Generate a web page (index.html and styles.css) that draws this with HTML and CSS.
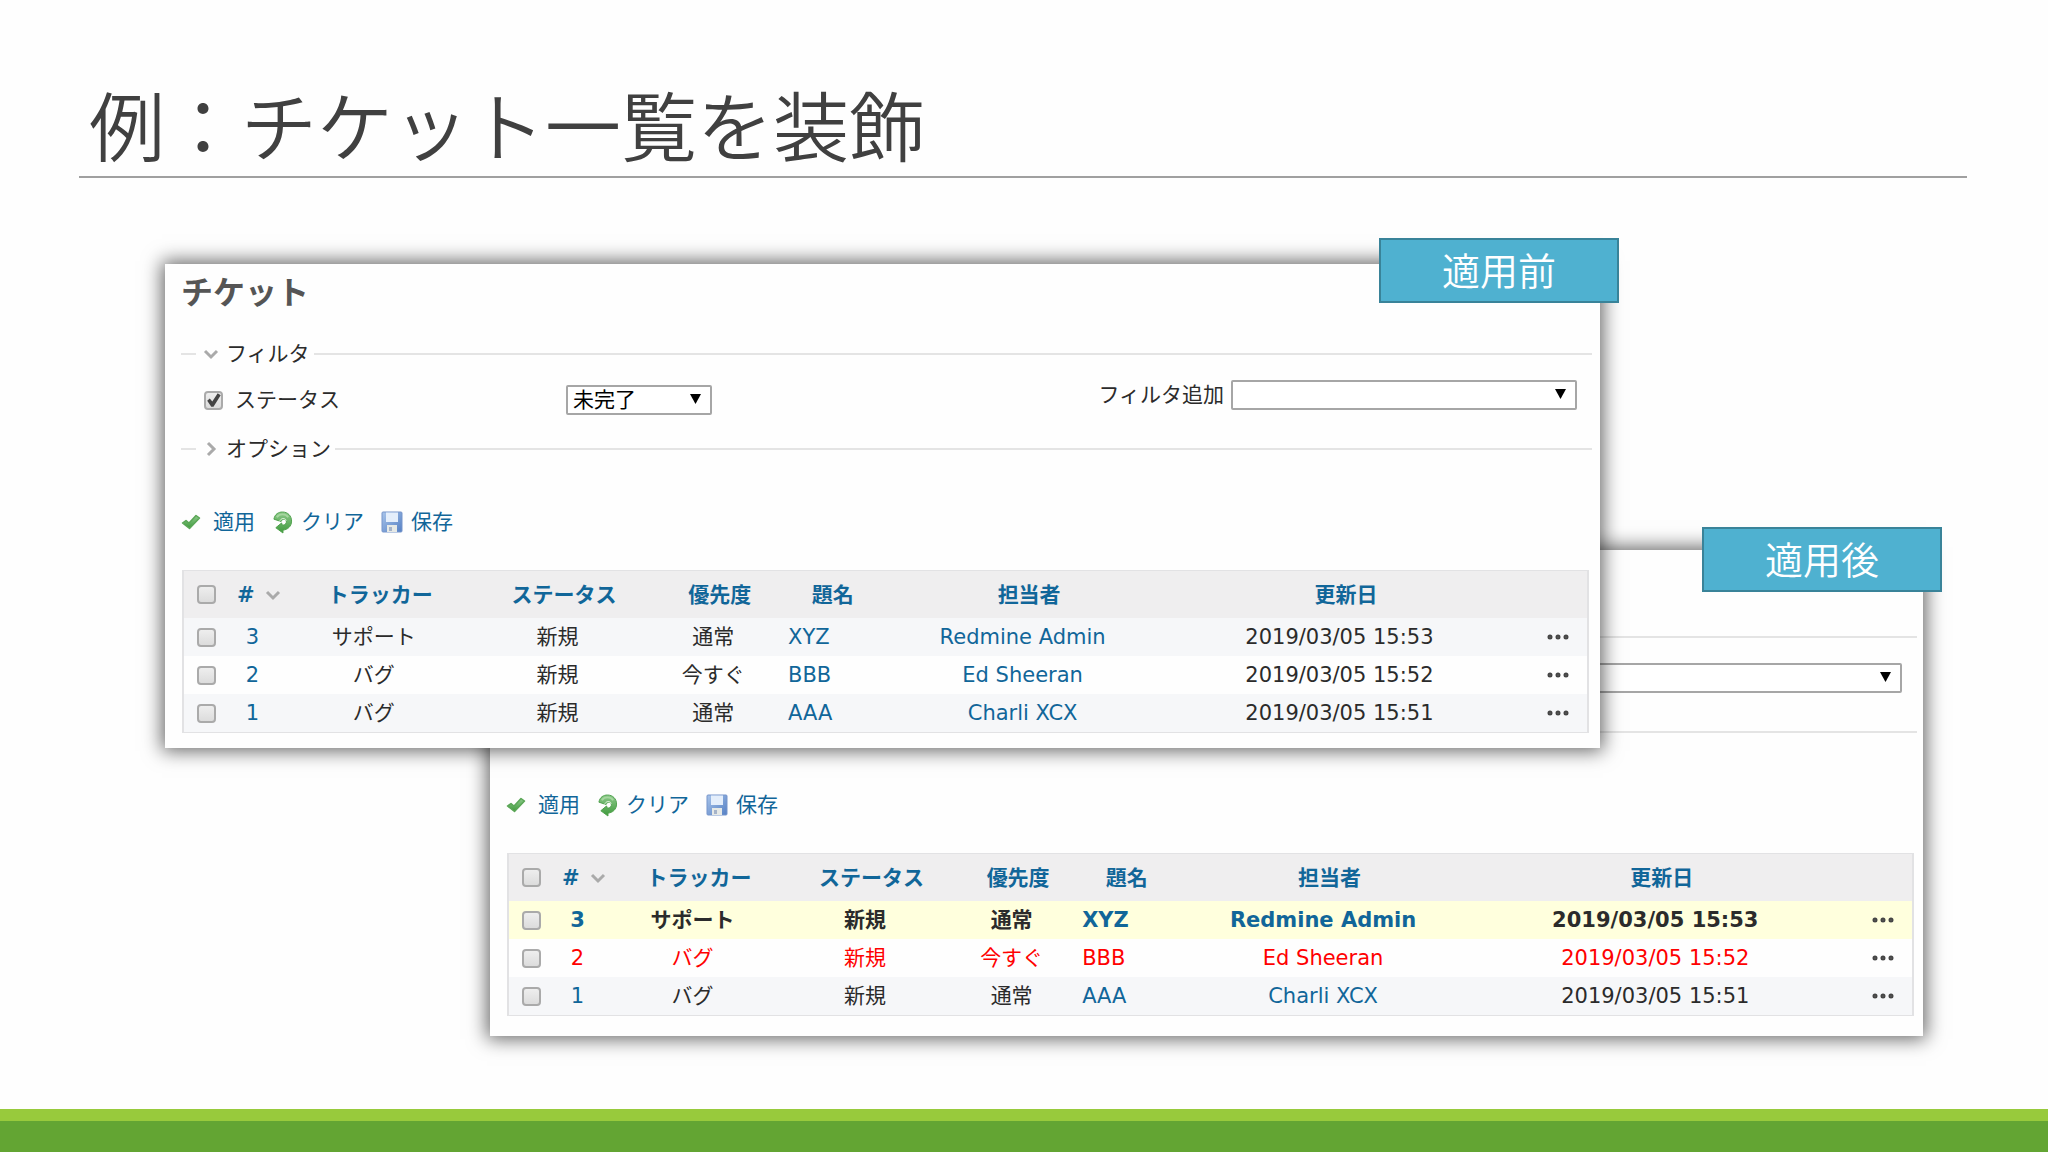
FILE: index.html
```html
<!DOCTYPE html>
<html lang="ja">
<head>
<meta charset="utf-8">
<meta name="viewport" content="width=device-width, initial-scale=1">
<title>例：チケット一覧を装飾</title>
<link rel="stylesheet" href="styles.css">
</head>
<body>
<svg class="defs" aria-hidden="true">
  <defs>
    <linearGradient id="green" x1="0" y1="0" x2="0" y2="1"><stop offset="0" stop-color="#8cc98a"/><stop offset="1" stop-color="#3f9a3c"/></linearGradient>
    <linearGradient id="blue" x1="0" y1="0" x2="1" y2="1"><stop offset="0" stop-color="#a8c4ea"/><stop offset="1" stop-color="#5580c4"/></linearGradient>
    <symbol id="i-check" viewBox="0 0 20 16"><path d="M1.5 9 L5 6.500 L8 9 L15 1.500 L18.500 4 L8.500 14.500 Z" fill="url(#green)" stroke="#5aa656" stroke-width="1.500" stroke-linejoin="round"/></symbol>
    <symbol id="i-reload" viewBox="0 0 22 24"><path d="M2 8.500 C3 3 7 1 11 1 C16.500 1 20.500 5 20.500 10.500 C20.500 16 16.500 19.500 11.500 20 V23 L4 17.500 L10 12.500 L11 15 C14 14.500 15.500 12.500 15 10.500 C14.500 8 11 7.500 9.500 11 Z" fill="url(#green)" stroke="#4d9f49" stroke-width="1" stroke-linejoin="round"/><path d="M5 6.500 C8 2.500 14 2.500 17 6.500" fill="none" stroke="#a6d69f" stroke-width="2"/><path d="M8 11 C9 7 14 7 15 10" fill="none" stroke="#e0f2dc" stroke-width="1"/></symbol>
    <symbol id="i-save" viewBox="0 0 22 22"><rect x="1" y="1" width="20" height="20" rx="1" fill="url(#blue)" stroke="#7795cb"/><rect x="5" y="1.500" width="12" height="9.500" fill="#e4eefb"/><rect x="6" y="14" width="10" height="7" fill="#e6e9e6"/><rect x="8" y="16" width="3" height="4" fill="#a5b3c9"/></symbol>
    <symbol id="i-add" viewBox="0 0 20 20"><circle cx="10" cy="10" r="9" fill="#3f9a5c"/><path d="M10 5v10M5 10h10" stroke="#fff" stroke-width="3"/></symbol>
    <symbol id="i-down" viewBox="0 0 16 16"><path d="M2 5 L8 11 L14 5" fill="none" stroke="#aaa" stroke-width="3"/></symbol>
    <symbol id="i-right" viewBox="0 0 16 16"><path d="M5 2 L11 8 L5 14" fill="none" stroke="#aaa" stroke-width="3"/></symbol>
    <symbol id="i-dots" viewBox="0 0 22 6"><g fill="#888" stroke="#444" stroke-width="2"><circle cx="3" cy="3" r="1.500"/><circle cx="11" cy="3" r="1.500"/><circle cx="19" cy="3" r="1.500"/></g></symbol>
  </defs>
</svg>

<header class="slide-header"><h1>例：チケット一覧を装飾</h1></header>

<main class="stage">
  <section class="panel panel-before">
    <div class="panel-head">
      <h2>チケット</h2>
      <svg class="icon-add" aria-hidden="true"><use href="#i-add"/></svg>
    </div>
    <fieldset>
      <legend><svg class="chevron" aria-hidden="true"><use href="#i-down"/></svg>フィルタ</legend>
      <div class="filter-row">
        <div class="filter-status">
          <input type="checkbox" id="status-a" checked><label for="status-a">ステータス</label>
          <span class="select select-short"><select aria-label="ステータスの値"><option>未完了</option></select></span>
        </div>
        <div class="filter-add">
          <label for="add-a">フィルタ追加</label>
          <span class="select select-long"><select id="add-a"><option></option></select></span>
        </div>
      </div>
    </fieldset>
    <fieldset>
      <legend><svg class="chevron" aria-hidden="true"><use href="#i-right"/></svg>オプション</legend>
    </fieldset>
    <p class="actions">
      <a href="#"><svg class="icon-check" aria-hidden="true"><use href="#i-check"/></svg>適用</a>
      <a href="#"><svg class="icon-reload" aria-hidden="true"><use href="#i-reload"/></svg>クリア</a>
      <a href="#"><svg class="icon-save" aria-hidden="true"><use href="#i-save"/></svg>保存</a>
    </p>
    <table class="issues">
      <colgroup><col class="c-check"><col class="c-id"><col class="c-tracker"><col class="c-status"><col class="c-priority"><col class="c-subject"><col class="c-assignee"><col class="c-updated"><col class="c-menu"></colgroup>
      <thead>
        <tr>
          <th class="check"><input type="checkbox" aria-label="すべて選択"></th>
          <th class="id"><a href="#">#<svg class="chevron" aria-hidden="true"><use href="#i-down"/></svg></a></th>
          <th><a href="#">トラッカー</a></th><th><a href="#">ステータス</a></th><th><a href="#">優先度</a></th><th><a href="#">題名</a></th><th><a href="#">担当者</a></th><th><a href="#">更新日</a></th><th></th>
        </tr>
      </thead>
      <tbody>
        <tr class="odd"><td class="check"><input type="checkbox" aria-label="3"></td><td class="id"><a href="#">3</a></td><td>サポート</td><td>新規</td><td>通常</td><td class="subject"><a href="#">XYZ</a></td><td><a href="#">Redmine Admin</a></td><td>2019/03/05 15:53</td><td class="menu"><button type="button" aria-label="操作"><svg aria-hidden="true"><use href="#i-dots"/></svg></button></td></tr>
        <tr><td class="check"><input type="checkbox" aria-label="2"></td><td class="id"><a href="#">2</a></td><td>バグ</td><td>新規</td><td>今すぐ</td><td class="subject"><a href="#">BBB</a></td><td><a href="#">Ed Sheeran</a></td><td>2019/03/05 15:52</td><td class="menu"><button type="button" aria-label="操作"><svg aria-hidden="true"><use href="#i-dots"/></svg></button></td></tr>
        <tr class="odd"><td class="check"><input type="checkbox" aria-label="1"></td><td class="id"><a href="#">1</a></td><td>バグ</td><td>新規</td><td>通常</td><td class="subject"><a href="#">AAA</a></td><td><a href="#">Charli XCX</a></td><td>2019/03/05 15:51</td><td class="menu"><button type="button" aria-label="操作"><svg aria-hidden="true"><use href="#i-dots"/></svg></button></td></tr>
      </tbody>
    </table>
    <div class="tag">適用前</div>
  </section>

  <section class="panel panel-after">
    <div class="panel-head"></div>
    <fieldset class="untitled">
      <div class="filter-row">
        <span class="select select-long"><select aria-label="追加"><option></option></select></span>
      </div>
    </fieldset>
    <fieldset class="untitled untitled-closed"></fieldset>
    <p class="actions">
      <a href="#"><svg class="icon-check" aria-hidden="true"><use href="#i-check"/></svg>適用</a>
      <a href="#"><svg class="icon-reload" aria-hidden="true"><use href="#i-reload"/></svg>クリア</a>
      <a href="#"><svg class="icon-save" aria-hidden="true"><use href="#i-save"/></svg>保存</a>
    </p>
    <table class="issues">
      <colgroup><col class="c-check"><col class="c-id"><col class="c-tracker"><col class="c-status"><col class="c-priority"><col class="c-subject"><col class="c-assignee"><col class="c-updated"><col class="c-menu"></colgroup>
      <thead>
        <tr>
          <th class="check"><input type="checkbox" aria-label="すべて選択"></th>
          <th class="id"><a href="#">#<svg class="chevron" aria-hidden="true"><use href="#i-down"/></svg></a></th>
          <th><a href="#">トラッカー</a></th><th><a href="#">ステータス</a></th><th><a href="#">優先度</a></th><th><a href="#">題名</a></th><th><a href="#">担当者</a></th><th><a href="#">更新日</a></th><th></th>
        </tr>
      </thead>
      <tbody>
        <tr class="mine"><td class="check"><input type="checkbox" aria-label="3"></td><td class="id"><a href="#">3</a></td><td>サポート</td><td>新規</td><td>通常</td><td class="subject"><a href="#">XYZ</a></td><td><a href="#">Redmine Admin</a></td><td>2019/03/05 15:53</td><td class="menu"><button type="button" aria-label="操作"><svg aria-hidden="true"><use href="#i-dots"/></svg></button></td></tr>
        <tr class="urgent"><td class="check"><input type="checkbox" aria-label="2"></td><td class="id"><a href="#">2</a></td><td>バグ</td><td>新規</td><td>今すぐ</td><td class="subject"><a href="#">BBB</a></td><td><a href="#">Ed Sheeran</a></td><td>2019/03/05 15:52</td><td class="menu"><button type="button" aria-label="操作"><svg aria-hidden="true"><use href="#i-dots"/></svg></button></td></tr>
        <tr class="odd"><td class="check"><input type="checkbox" aria-label="1"></td><td class="id"><a href="#">1</a></td><td>バグ</td><td>新規</td><td>通常</td><td class="subject"><a href="#">AAA</a></td><td><a href="#">Charli XCX</a></td><td>2019/03/05 15:51</td><td class="menu"><button type="button" aria-label="操作"><svg aria-hidden="true"><use href="#i-dots"/></svg></button></td></tr>
      </tbody>
    </table>
    <div class="tag">適用後</div>
  </section>
</main>

<footer class="slide-footer"></footer>
</body>
</html>
```

FILE: styles.css
```css
*,
*::before,
*::after {
  box-sizing: border-box;
}

body {
  margin: 0;
  min-height: 100vh;
  display: flex;
  flex-direction: column;
  background: #fefefe;
  color: #2b2b2b;
  font-family: "DejaVu Sans", "Noto Sans CJK JP", sans-serif;
  font-size: 21px;
  line-height: 28px;
}

.defs {
  position: absolute;
  width: 0;
  height: 0;
}

a {
  color: #116699;
  text-decoration: none;
}

.slide-header {
  margin: 0 81px 86px 79px;
  padding: 72px 0 2px 10px;
  border-bottom: 2px solid #a0a0a0;
}

h1 {
  margin: 0;
  color: #404040;
  font-family: "Noto Sans CJK JP", sans-serif;
  font-size: 76px;
  font-weight: 350;
  line-height: 102px;
}

/* Two overlapping panels share a proportional grid. */
.stage {
  display: grid;
  grid-template-columns:
    minmax(0, 165fr) minmax(0, 325fr) minmax(0, 1110fr)
    minmax(0, 323fr) minmax(0, 125fr);
  grid-template-rows: 286px 198px auto;
  margin-bottom: 73px;
}

.panel {
  position: relative;
  background: #fefefe;
  box-shadow: 0 0 18px 3px rgba(0, 0, 0, 0.6);
}

.panel-before {
  grid-area: 1 / 2 / 3 / 4;
  z-index: 2;
  padding: 9px 8px 15px 16px;
}

.panel-after {
  grid-area: 2 / 3 / 4 / 5;
  z-index: 1;
  padding: 6px 6px 20px 16px;
}

.panel-head {
  display: flex;
  justify-content: space-between;
  align-items: center;
  height: 40px;
  margin-bottom: 27px;
  padding-right: 155px;
}

.panel-after .panel-head {
  margin-bottom: 40px;
}

h2 {
  margin: 0;
  color: #555;
  font-size: 32px;
  line-height: 40px;
}

.icon-add {
  width: 22px;
  height: 22px;
}

fieldset {
  margin: 0;
  padding: 0 15px;
  border: 0;
  border-top: 2px solid #e4e4e4;
  min-width: 0;
}

legend {
  display: flex;
  align-items: center;
  gap: 7px;
  padding: 0 4px 0 7px;
}

.chevron {
  width: 16px;
  height: 16px;
}

.filter-row {
  display: flex;
  justify-content: space-between;
  align-items: flex-start;
  height: 67px;
  padding: 12px 0 0 8px;
}

/* Group without a legend: keeps the height a legend would take. */
.untitled .filter-row {
  justify-content: flex-end;
  height: 93px;
  padding-top: 25px;
}

.untitled-closed {
  height: 15px;
}

.filter-status,
.filter-add {
  display: flex;
  align-items: center;
}

.filter-status {
  padding-top: 5px;
}

.filter-status label {
  width: 331px;
  margin-left: 12px;
}

.filter-add {
  gap: 7px;
}

.select {
  position: relative;
  display: block;
}

.select::after {
  content: "";
  position: absolute;
  right: 11px;
  top: 9px;
  width: 11px;
  height: 10px;
  background: #000;
  clip-path: polygon(0 0, 100% 0, 50% 100%);
  pointer-events: none;
}

.select-short {
  width: 146px;
}

.select-long {
  width: 346px;
}

select {
  appearance: none;
  display: block;
  width: 100%;
  height: 30px;
  margin: 0;
  padding: 0 5px;
  border: 2px solid #a6a6a6;
  border-radius: 2px;
  background: #fff;
  color: #000;
  font: inherit;
  line-height: 26px;
}

input[type="checkbox"] {
  appearance: none;
  display: block;
  width: 19px;
  height: 19px;
  margin: 0;
  border: 2px solid #aaa;
  border-radius: 4px;
  background: linear-gradient(#eee, #dcdcdc);
}

input[type="checkbox"]:checked::after {
  content: "";
  display: block;
  width: 15px;
  height: 15px;
  background: #444;
  clip-path: polygon(8% 55%, 25% 40%, 42% 60%, 78% 5%, 98% 18%, 50% 95%, 35% 95%);
}

.actions {
  display: flex;
  gap: 17px;
  margin: 45px 0 34px;
}

.actions a {
  display: flex;
  align-items: center;
  gap: 8px;
}

.icon-check {
  width: 20px;
  height: 16px;
  margin-right: 4px;
}

.icon-reload {
  width: 21px;
  height: 23px;
}

.icon-save {
  width: 22px;
  height: 22px;
}

.issues {
  width: calc(100% - 4px);
  margin-left: 1px;
  table-layout: fixed;
  border-collapse: separate;
  border-spacing: 0;
  border: 2px solid #e2e2e4;
  border-top-width: 1px;
  border-bottom-width: 1px;
}

.c-check { width: 45px; }
.c-id { width: 65px; }
.c-menu { width: 66px; }

.panel-before .c-tracker { width: 12.3%; }
.panel-before .c-status { width: 13.9%; }
.panel-before .c-priority { width: 8.3%; }
.panel-before .c-subject { width: 7.8%; }
.panel-before .c-assignee { width: 20.2%; }

.panel-after .c-tracker { width: 11.4%; }
.panel-after .c-status { width: 13.2%; }
.panel-after .c-priority { width: 7.7%; }
.panel-after .c-subject { width: 7.8%; }
.panel-after .c-assignee { width: 21.1%; }

th,
td {
  height: 38px;
  padding: 0;
  text-align: center;
  white-space: nowrap;
}

th {
  height: 47px;
  background: #efeeef;
}

td {
  padding-right: 13px;
}

td.id {
  padding-right: 18px;
}

th.id {
  padding-left: 8px;
  text-align: left;
}

th.id a {
  display: flex;
  align-items: center;
  gap: 10px;
}

.check {
  padding: 0 0 0 13px;
}

td.subject {
  padding-left: 10px;
  text-align: left;
}

td.menu {
  padding-right: 18px;
  text-align: right;
}

.menu button {
  display: block;
  margin-left: auto;
  padding: 0;
  border: 0;
  background: none;
}

.menu svg {
  display: block;
  width: 22px;
  height: 6px;
}

.odd td {
  background: #f6f7f9;
}

.mine td {
  background: #ffffdd;
  font-weight: 700;
}

.urgent,
.urgent a {
  color: #f00;
}

.tag {
  position: absolute;
  top: -26px;
  right: -19px;
  width: 240px;
  height: 65px;
  border: 2px solid #398399;
  background: #4fb1d0;
  color: #fff;
  font-family: "Noto Sans CJK JP", sans-serif;
  font-size: 38px;
  font-weight: 350;
  line-height: 58px;
  text-align: center;
}

.panel-after .tag {
  top: -23px;
}

.slide-footer {
  height: 43px;
  margin-top: auto;
  border-top: 12px solid #98ca3c;
  background: #63a533;
}
```
